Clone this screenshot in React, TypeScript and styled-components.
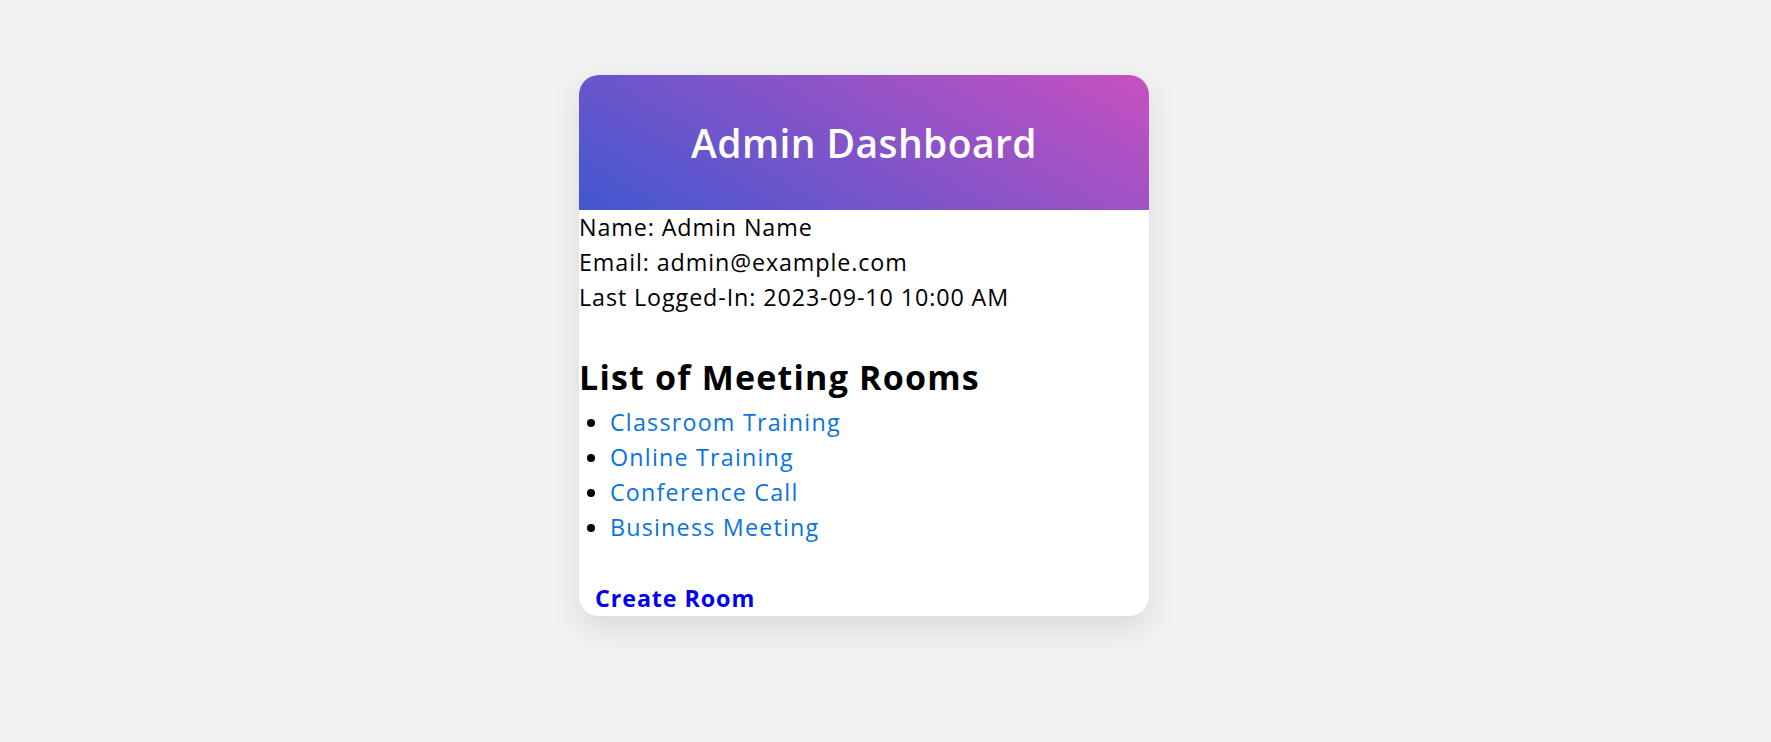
import React from "react";
import styled, { createGlobalStyle } from "styled-components";

const GlobalStyle = createGlobalStyle`
  body {
    margin: 0;
    background: #f2f2f2;
    font-family: "Open Sans", "Noto Sans", sans-serif;
  }
`;

const rooms = [
  "Classroom Training",
  "Online Training",
  "Conference Call",
  "Business Meeting",
];

const AdminDashboard = () => {
  return (
    <PageStyle>
      <GlobalStyle />
      <CardStyle>
        <HeaderStyle>
          <h1 className="dashboard-title">Admin Dashboard</h1>
        </HeaderStyle>
        <div className="admin-info">
          <p>Name: Admin Name</p>
          <p>Email: admin@example.com</p>
          <p>Last Logged-In: 2023-09-10 10:00 AM</p>
        </div>
        <h2 className="rooms-title">List of Meeting Rooms</h2>
        <ul className="rooms-list">
          {rooms.map((room) => (
            <li key={room}>
              <a href="#">{room}</a>
            </li>
          ))}
        </ul>
        <CreateButton>Create Room</CreateButton>
      </CardStyle>
    </PageStyle>
  );
};

export default AdminDashboard;

const PageStyle = styled.div`
  padding: 75px 0 128px 579px;
`;

const CardStyle = styled.div`
  width: 570px;
  background: #ffffff;
  border-radius: 20px;
  overflow: hidden;
  box-shadow: 0 12px 32px rgba(0, 0, 0, 0.1);
  color: #000;
  font-size: 23.3px;
  line-height: 35px;
  letter-spacing: 0.9px;

  .admin-info p {
    margin: 0;
  }

  .rooms-title {
    margin: 35px 0 0;
    font-size: 34px;
    line-height: 55px;
    font-weight: 700;
    letter-spacing: 1.2px;
  }

  .rooms-list {
    margin: 0;
    padding-left: 31px;
    letter-spacing: 1.2px;
  }

  .rooms-list a {
    color: #0a74da;
    text-decoration: none;
  }
`;

const HeaderStyle = styled.div`
  height: 135px;
  display: flex;
  align-items: center;
  justify-content: center;
  background: linear-gradient(30deg, #4158d0 0%, #c850c0 100%);

  .dashboard-title {
    margin: 0;
    color: #ffffff;
    font-size: 39px;
    font-weight: 600;
    letter-spacing: 0.4px;
  }
`;

const CreateButton = styled.button`
  display: block;
  margin-top: 36px;
  padding: 0 16px;
  border: none;
  background: transparent;
  color: #0000ee;
  font-family: inherit;
  font-size: 23.3px;
  line-height: 35px;
  font-weight: 700;
  letter-spacing: 0.9px;
  cursor: pointer;
`;
